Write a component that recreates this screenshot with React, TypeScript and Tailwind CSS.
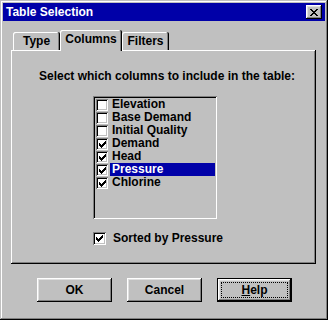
const items = [
  { label: "Elevation", checked: false },
  { label: "Base Demand", checked: false },
  { label: "Initial Quality", checked: false },
  { label: "Demand", checked: true },
  { label: "Head", checked: true },
  { label: "Pressure", checked: true, selected: true },
  { label: "Chlorine", checked: true },
];

function CheckMark() {
  return (
    <svg width="7" height="7" viewBox="0 0 7 7" shapeRendering="crispEdges">
      <path
        d="M6 0h1v1h-1zM5 1h2v1h-2zM0 2h1v1h-1zM4 2h3v1h-3zM0 3h2v1h-2zM3 3h3v1h-3zM0 4h5v1h-5zM1 5h3v1h-3zM2 6h1v1h-1z"
        fill="#000"
      />
    </svg>
  );
}

function CloseGlyph() {
  return (
    <svg width="8" height="7" viewBox="0 0 8 7" shapeRendering="crispEdges">
      <path
        d="M0 0h2v1h-2zM6 0h2v1h-2zM1 1h2v1h-2zM5 1h2v1h-2zM2 2h4v1h-4zM3 3h2v1h-2zM2 4h4v1h-4zM1 5h2v1h-2zM5 5h2v1h-2zM0 6h2v1h-2zM6 6h2v1h-2z"
        fill="#000"
      />
    </svg>
  );
}

function Checkbox({ checked, size }: { checked: boolean; size: "sm" | "md" }) {
  return (
    <div
      className={`${size === "sm" ? "w-[12px] h-[12px]" : "w-[13px] h-[13px]"} shrink-0 bg-white flex items-center justify-center shadow-[inset_1px_1px_0_#808080,inset_-1px_-1px_0_#fff,inset_2px_2px_0_#000,inset_-2px_-2px_0_#c0c0c0]`}
    >
      {checked && <CheckMark />}
    </div>
  );
}

const raised =
  "shadow-[inset_-1px_-1px_0_#000,inset_1px_1px_0_#fff,inset_-2px_-2px_0_#808080,inset_2px_2px_0_#dfdfdf]";

export default function App() {
  return (
    <div className="w-[328px] h-[320px] bg-[#c0c0c0] p-[3px] flex flex-col font-['Liberation_Sans',Arial,sans-serif] text-[12px] leading-[13px] font-bold text-black shadow-[inset_-1px_-1px_0_#000,inset_1px_1px_0_#c0c0c0,inset_-2px_-2px_0_#808080,inset_2px_2px_0_#fff]">
      {/* title bar */}
      <div className="h-[18px] bg-[#0000a8] flex items-center justify-between pl-[3px] pr-[3px]">
        <span className="text-white whitespace-nowrap">Table Selection</span>
        <button type="button" className={`w-[16px] h-[14px] bg-[#c0c0c0] flex items-center justify-center ${raised}`}>
          <CloseGlyph />
        </button>
      </div>

      <div className="ml-[8px] mt-[9px] w-[305px]">
        {/* tabs */}
        <div className="h-[20px] flex items-end pl-[2px]">
          <div className="w-[47px] h-[18px] flex items-center justify-center rounded-t-[2px] shadow-[inset_-1px_0_0_#000,inset_1px_1px_0_#fff,inset_-2px_0_0_#808080]">
            Type
          </div>
          <div className="relative z-10 -mb-[1px] w-[62px] h-[21px] pb-[2px] bg-[#c0c0c0] flex items-center justify-center rounded-t-[2px] shadow-[inset_-1px_0_0_#000,inset_1px_1px_0_#fff,inset_-2px_0_0_#808080]">
            Columns
          </div>
          <div className="w-[47px] h-[18px] flex items-center justify-center rounded-t-[2px] shadow-[inset_-1px_0_0_#000,inset_1px_1px_0_#fff,inset_-2px_0_0_#808080]">
            Filters
          </div>
        </div>

        {/* panel */}
        <div className="h-[214px] pt-[20px] flex flex-col shadow-[inset_-1px_-1px_0_#000,inset_1px_1px_0_#fff,inset_-2px_-2px_0_#808080]">
          <div className="pl-[28px] whitespace-nowrap">Select which columns to include in the table:</div>

          <div className="ml-[82px] mt-[13px] w-[124px] h-[123px] p-[2px] shadow-[inset_1px_1px_0_#808080,inset_-1px_-1px_0_#fff,inset_2px_2px_0_#000,inset_-2px_-2px_0_#c0c0c0]">
            {items.map((it) => (
              <div key={it.label} className="h-[13px] flex">
                <div className="ml-[1px] mt-[1px]">
                  <Checkbox checked={it.checked} size="sm" />
                </div>
                <div
                  className={`ml-[2px] pl-[2px] flex-1 whitespace-nowrap ${
                    it.selected ? "bg-[#0000a8] text-white" : ""
                  }`}
                >
                  {it.label}
                </div>
              </div>
            ))}
          </div>

          <div className="ml-[82px] mt-[13px] flex items-center gap-[7px]">
            <Checkbox checked size="md" />
            <span className="whitespace-nowrap">Sorted by Pressure</span>
          </div>
        </div>
      </div>

      {/* buttons */}
      <div className="mt-[14px] pl-[34px] flex gap-[15px]">
        <button type="button" className={`w-[75px] h-[24px] flex items-center justify-center ${raised}`}>
          OK
        </button>
        <button type="button" className={`w-[75px] h-[24px] flex items-center justify-center ${raised}`}>
          Cancel
        </button>
        <button type="button" className="w-[75px] h-[24px] border border-black">
          <div className={`h-full p-[3px] ${raised}`}>
            <div className="h-full border border-dotted border-black flex items-center justify-center">
              <span>
                <span className="underline underline-offset-[1px]">H</span>elp
              </span>
            </div>
          </div>
        </button>
      </div>
    </div>
  );
}
